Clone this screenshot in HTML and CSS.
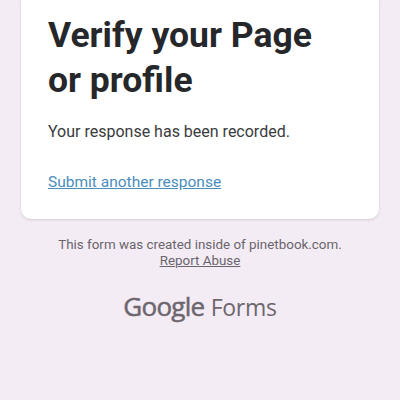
FILE: index.html
```html
<!DOCTYPE html>
<html lang="en">
<head>
<meta charset="UTF-8" />
<meta name="viewport" content="width=device-width, initial-scale=1" />
<title>Verify your Page or profile</title>
<link rel="stylesheet" href="styles.css">
</head>
<body>

  <div class="card">
    <h1>Verify your Page or profile</h1>
    <p class="message">Your response has been recorded.</p>
    <a class="another" href="#">Submit another response</a>
  </div>

  <div class="footer">
    <p class="note">This form was created inside of pinetbook.com.<br><a href="#">Report Abuse</a></p>
    <div class="logo"><span class="google">Google</span> <span class="forms">Forms</span></div>
  </div>

</body>
</html>
```

FILE: styles.css
```css
html, body {
  height: 100%;
}
body {
  margin: 0;
  overflow: hidden;
  background: #f4ecf4;
  font-family: Roboto, sans-serif;
  color: #202124;
}
.card {
  box-sizing: border-box;
  width: 358px;
  height: 219px;
  margin: 0 21px;
  padding: 13px 27px 0;
  background: #fff;
  border-radius: 0 0 10px 10px;
  box-shadow: 0 1px 3px rgba(60, 40, 60, 0.16);
}
.card h1 {
  margin: 0;
  width: 290px;
  font-size: 35.5px;
  line-height: 45px;
  font-weight: 700;
  color: #26272a;
}
.message {
  margin: 17px 0 0;
  font-size: 16px;
  line-height: 24px;
  color: #3a3b3e;
}
.another {
  display: inline-block;
  margin-top: 26px;
  font-size: 15.5px;
  line-height: 24px;
  color: #4a8dbd;
}
.footer {
  text-align: center;
  color: #6a656d;
}
.note {
  margin: 18px 0 0;
  font-size: 13.4px;
  line-height: 16px;
}
.note a {
  color: #6a656d;
}
.logo {
  margin-top: 21px;
  font-size: 26px;
  line-height: 32px;
  color: #6c666f;
}
.google {
  font-family: "Open Sans", sans-serif;
  font-weight: 400;
  letter-spacing: -0.75px;
  -webkit-text-stroke: 0.5px #6c666f;
}
.forms {
  font-family: "Open Sans", sans-serif;
  font-size: 23px;
  letter-spacing: -0.3px;
}
```
